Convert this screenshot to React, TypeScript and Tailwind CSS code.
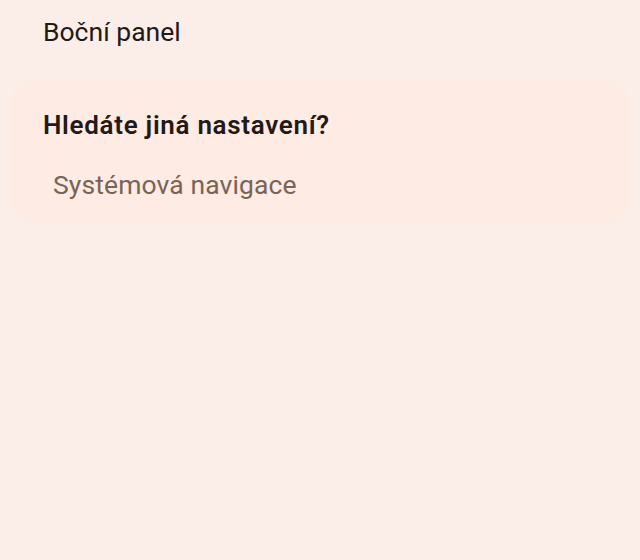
export default function App() {
  return (
    <div className="w-[640px] h-[560px] bg-[#fbede8] font-['Roboto',sans-serif] pt-[15px]">
      <div className="px-[43px] h-[34px] flex items-center text-[26.5px] text-[#231a17]">Boční panel</div>
      <div className="mx-[10px] mt-[30px] rounded-[26px] bg-[#fdebe4] px-[33px] pt-[30px] pb-[22px]">
        <div className="text-[26px] font-semibold tracking-[0.7px] text-[#231a17] leading-[32px]">Hledáte jiná nastavení?</div>
        <div className="mt-[28px] pl-[10px] text-[26.5px] tracking-[0.1px] text-[#7a6456] leading-[32px]">Systémová navigace</div>
      </div>
    </div>
  );
}
